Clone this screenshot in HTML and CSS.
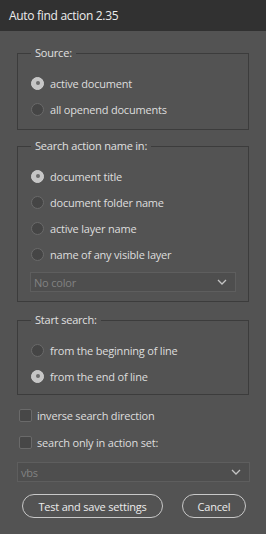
FILE: index.html
```html
<!DOCTYPE html>
<html>
<head>
<meta charset="utf-8">
<link rel="stylesheet" href="styles.css">
</head>
<body>
<div class="window">
  <div class="titlebar">Auto find action 2.35</div>
  <div class="content">
    <fieldset class="group group-source">
      <legend>Source:</legend>
      <div class="row"><span class="radio checked"></span><span>active document</span></div>
      <div class="row"><span class="radio"></span><span>all openend documents</span></div>
    </fieldset>
    <fieldset class="group group-search">
      <legend>Search action name in:</legend>
      <div class="row"><span class="radio checked"></span><span>document title</span></div>
      <div class="row"><span class="radio"></span><span>document folder name</span></div>
      <div class="row"><span class="radio"></span><span>active layer name</span></div>
      <div class="row"><span class="radio"></span><span>name of any visible layer</span></div>
      <div class="select select-inner"><span>No color</span><svg class="chev" width="10" height="6" viewBox="0 0 10 6"><path d="M1 1 L5 5 L9 1" fill="none" stroke="#c4c4c4" stroke-width="1.3"/></svg></div>
    </fieldset>
    <fieldset class="group group-start">
      <legend>Start search:</legend>
      <div class="row"><span class="radio"></span><span>from the beginning of line</span></div>
      <div class="row"><span class="radio checked"></span><span>from the end of line</span></div>
    </fieldset>
    <div class="checks">
      <div class="row crow"><span class="check"></span><span>inverse search direction</span></div>
      <div class="row crow"><span class="check"></span><span>search only in action set:</span></div>
    </div>
    <div class="select select-outer"><span>vbs</span><svg class="chev" width="10" height="6" viewBox="0 0 10 6"><path d="M1 1 L5 5 L9 1" fill="none" stroke="#c4c4c4" stroke-width="1.3"/></svg></div>
    <div class="buttons">
      <button class="btn btn-main">Test and save settings</button>
      <button class="btn btn-cancel">Cancel</button>
    </div>
  </div>
</div>
</body>
</html>
```

FILE: styles.css
```css
html, body {
  margin: 0;
  padding: 0;
  background: #535353;
}
body {
  font-family: "Open Sans", "Noto Sans", sans-serif;
  font-size: 11px;
  letter-spacing: -0.2px;
  color: #dedede;
}
.window {
  width: 266px;
  height: 534px;
  background: #535353;
  overflow: hidden;
}
.titlebar {
  height: 31px;
  background: #313131;
  color: #ececec;
  font-size: 12px;
  letter-spacing: -0.3px;
  line-height: 31px;
  padding-left: 9px;
}
.content {
  padding: 14px 17px 0 17px;
}
.group {
  margin: 0 0 10px 0;
  padding: 9px 12px 5px 13px;
  border: 1px solid #3c3c3c;
  min-width: 0;
}
.group legend {
  margin-left: 0;
  padding: 0 4px;
  line-height: 16px;
  color: #e0e0e0;
}
.group-source {
  padding-bottom: 7px;
  margin-bottom: 8px;
}
.group-search {
  padding-bottom: 9px;
}
.row {
  display: flex;
  align-items: center;
  gap: 6px;
  height: 26px;
  white-space: nowrap;
}
.radio {
  box-sizing: border-box;
  width: 13px;
  height: 13px;
  border-radius: 50%;
  border: 1px solid #6a6a6a;
  background: #454545;
  flex: none;
  position: relative;
}
.radio.checked {
  background: #c6c6c6;
  border-color: #cfcfcf;
}
.radio.checked::after {
  content: "";
  position: absolute;
  left: 3.5px;
  top: 3.5px;
  width: 4px;
  height: 4px;
  border-radius: 50%;
  background: #6e6e6e;
}
.select {
  box-sizing: border-box;
  height: 20px;
  border: 1px solid #5e5e5e;
  background: #4e4e4e;
  color: #828282;
  display: flex;
  align-items: center;
  justify-content: space-between;
  padding: 0 8px 0 3px;
}
.select-inner {
  margin-top: 5px;
  margin-left: -1px;
}
.checks {
  margin-left: 2px;
  margin-top: -3px;
}
.crow {
  height: 27px;
  gap: 5px;
}
.check {
  box-sizing: border-box;
  width: 13px;
  height: 13px;
  border: 1px solid #6a6a6a;
  background: #474747;
  border-radius: 2px;
  flex: none;
}
.select-outer {
  margin-top: 6px;
  margin-right: -1px;
}
.buttons {
  display: flex;
  margin-top: 12px;
  padding-left: 5px;
  gap: 19px;
}
.btn {
  box-sizing: border-box;
  height: 24px;
  border: 1px solid #c8c8c8;
  border-radius: 12px;
  background: transparent;
  color: #ececec;
  font-family: inherit;
  font-size: 11px;
  letter-spacing: -0.2px;
  padding: 0;
}
.btn-main {
  width: 141px;
}
.btn-cancel {
  width: 64px;
}
```
